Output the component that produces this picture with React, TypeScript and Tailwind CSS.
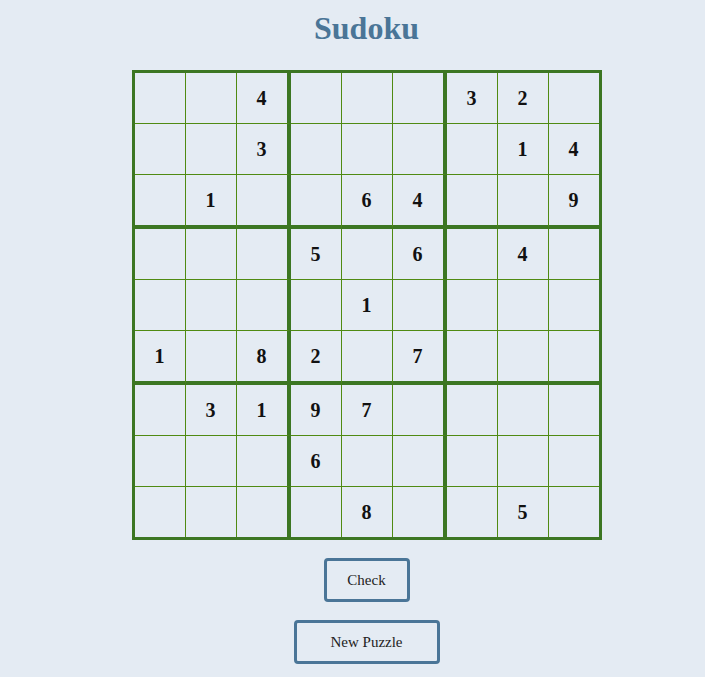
import React from 'react';

const puzzle: number[][] = [
  [0, 0, 4, 0, 0, 0, 3, 2, 0],
  [0, 0, 3, 0, 0, 0, 0, 1, 4],
  [0, 1, 0, 0, 6, 4, 0, 0, 9],
  [0, 0, 0, 5, 0, 6, 0, 4, 0],
  [0, 0, 0, 0, 1, 0, 0, 0, 0],
  [1, 0, 8, 2, 0, 7, 0, 0, 0],
  [0, 3, 1, 9, 7, 0, 0, 0, 0],
  [0, 0, 0, 6, 0, 0, 0, 0, 0],
  [0, 0, 0, 0, 8, 0, 0, 5, 0],
];

const cellClass = (r: number, c: number) => {
  const right =
    c === 8 ? 'w-[50px]' : c % 3 === 2 ? 'w-[54px] border-r-[4px] border-r-[#3c7622]' : 'w-[51px] border-r border-r-[#4f8a12]';
  const bottom =
    r === 8 ? 'h-[50px]' : r % 3 === 2 ? 'h-[54px] border-b-[4px] border-b-[#3c7622]' : 'h-[51px] border-b border-b-[#4f8a12]';
  return `${right} ${bottom} flex items-center justify-center`;
};

export default function App() {
  return (
    <div className="min-h-screen bg-[#e4ebf3] pl-[28px] pt-[10px] pb-4 flex flex-col items-center text-[#111]" style={{ fontFamily: '"Liberation Serif", "Times New Roman", serif' }}>
      <h1 className="text-[32px] font-bold text-[#4a7597] leading-[36px]">Sudoku</h1>

      <div className="mt-[24px] border-[3px] border-[#3c7622] flex flex-col">
        {puzzle.map((row, r) => (
          <div key={r} className="flex">
            {row.map((v, c) => (
              <div key={c} className={cellClass(r, c)}>
                {v !== 0 && <span className="text-[20px] font-bold leading-none">{v}</span>}
              </div>
            ))}
          </div>
        ))}
      </div>

      <button className="mt-[18px] w-[86px] h-[44px] border-[3px] border-[#4a7597] rounded-[4px] text-[15px] text-[#222] bg-transparent">
        Check
      </button>
      <button className="mt-[18px] w-[146px] h-[44px] border-[3px] border-[#4a7597] rounded-[4px] text-[15px] text-[#222] bg-transparent">
        New Puzzle
      </button>
    </div>
  );
}
